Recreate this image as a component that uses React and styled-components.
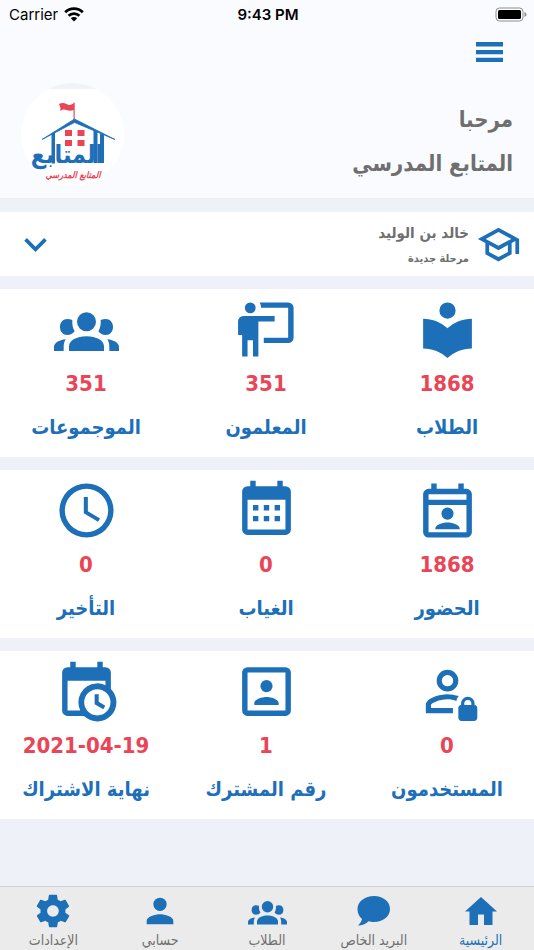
import React from "react";
import styled, { createGlobalStyle } from "styled-components";
import { IoMdSettings } from "react-icons/io";

const blue = "#1d6fb8";
const red = "#ea4557";
const grey = "#6f6f6f";

const GlobalStyle = createGlobalStyle`
  * { box-sizing: border-box; }
  body {
    margin: 0;
    background: #eef1f7;
    font-family: "DejaVu Sans Condensed", "DejaVu Sans", sans-serif;
  }
  button { font: inherit; border: 0; padding: 0; background: none; cursor: pointer; }
  svg { display: block; }
`;

const Screen = styled.div`
  min-height: 100vh;
  display: flex;
  flex-direction: column;
  color: ${grey};
`;

const Header = styled.header`
  background: #fafbff;
  border-bottom: 1px solid #eaedf2;
  padding-bottom: 12px;
`;

const StatusBar = styled.div`
  direction: ltr;
  display: grid;
  grid-template-columns: 1fr auto 1fr;
  align-items: center;
  height: 28px;
  padding: 0 7px 0 9px;
  color: #000;
  font-family: Inter, sans-serif;
  font-size: 15px;
`;

const Carrier = styled.div`
  display: flex;
  align-items: center;
  gap: 6px;
`;

const Time = styled.time`
  font-weight: 600;
`;

const Battery = styled.div`
  justify-self: end;
`;

const Toolbar = styled.div`
  display: flex;
  padding: 14px 31px 0;
`;

const MenuButton = styled.button`
  color: ${blue};
`;

const Welcome = styled.div`
  display: flex;
  justify-content: space-between;
  align-items: flex-end;
  padding: 21px 21px 0;
`;

const Greeting = styled.h1`
  margin: 0;
  font-size: 22px;
  font-weight: 700;
  line-height: 44px;
`;

const Avatar = styled.div`
  width: 103px;
  height: 103px;
  border-radius: 50%;
  overflow: hidden;
  background: #fff;
`;

const Main = styled.main`
  flex: 1;
  display: flex;
  flex-direction: column;
  gap: 13px;
  padding: 13px 0;
`;

const School = styled.button`
  display: flex;
  align-items: center;
  gap: 7px;
  width: 100%;
  height: 64px;
  padding: 0 13px;
  background: #fff;
  color: ${blue};
  text-align: start;
`;

const SchoolText = styled.span`
  flex: 1;
  display: flex;
  flex-direction: column;
  color: ${grey};
  font-weight: 700;
`;

const SchoolName = styled.span`
  font-size: 15px;
  line-height: 30px;
`;

const SchoolStage = styled.span`
  font-size: 11px;
  line-height: 22px;
`;

const Card = styled.section`
  display: grid;
  grid-template-columns: 174fr 188fr 172fr;
  min-height: 168px;
  padding-top: 8px;
  background: #fff;
`;

const Stat = styled.button`
  display: flex;
  flex-direction: column;
  align-items: center;
  color: ${blue};
  font-weight: 700;
  white-space: nowrap;
`;

const StatValue = styled.span`
  margin-top: 6px;
  color: ${red};
  font-size: 22px;
  line-height: 32px;
`;

const StatLabel = styled.span`
  margin-top: 9px;
  font-size: 20px;
  line-height: 36px;
`;

const TabBar = styled.nav`
  display: grid;
  grid-template-columns: repeat(5, 1fr);
  height: 64px;
  border-top: 1px solid #cfd3d8;
  background: #ebebeb;
`;

const Tab = styled.a`
  display: flex;
  flex-direction: column;
  align-items: center;
  padding-top: 4px;
  color: ${(p) => (p.$active ? blue : grey)};
  font-size: 14px;
  line-height: 18px;
  text-decoration: none;
  white-space: nowrap;

  svg { color: ${blue}; }
`;

const TabIcon = styled.span`
  display: flex;
  align-items: center;
  justify-content: center;
  height: 40px;
`;

const Icon = ({ size = 65, children }) => (
  <svg width={size} height={size} viewBox="0 0 24 24" fill="currentColor" fillRule="evenodd" aria-hidden="true">
    {children}
  </svg>
);

const PeopleIcon = ({ size }) => (
  <svg width={size} height={size} viewBox="0 0 195 195" fill="currentColor" aria-hidden="true">
    <circle cx="97.500" cy="74" r="28.500" />
    <path d="M45 162v-14c0-17 23-30 52.500-30s52.500 13 52.500 30v14z" />
    <path d="M55 69c-1 12 1 24 7 34-5 7-13 11-22 11-13 0-22-10-22-24s9-24 22-24c5 0 10 1 15 3z" />
    <path d="M140 69c1 12-1 24-7 34 5 7 13 11 22 11 13 0 22-10 22-24s-9-24-22-24c-5 0-10 1-15 3z" />
    <path d="M35 127c-20 2-35 11-35 23v12h29v-12c0-9 2-16 6-23z" />
    <path d="M160 127c20 2 35 11 35 23v12h-29v-12c0-9-2-16-6-23z" />
  </svg>
);

const Logo = () => (
  <svg width="103" height="103" viewBox="0 0 103 103" role="img" aria-label="المتابع المدرسي">
    <rect width="103" height="6" fill="#f2f3f9" />
    <path d="M38 21q4-2 7.500 0t7-.5V19.500h1.200V38h-1.200V27q-3 1.500-7 0t-6.500 1l.5-3z" fill={red} />
    <path d="M21 56.500 53.500 36 94 56.500 53.500 39.500z" fill={blue} stroke={blue} strokeWidth="0.800" />
    <path d="M30.500 50.500l3.500-2v32h-3.500zM72.500 47l4 1.800V80h-4zM79 50l4 1.800V80h-4z" fill={blue} />
    <path d="M44 47h7v6h-7zM56.500 47h7v6h-7zM44 57h7v6h-7zM56.500 57h7v6h-7z" fill={red} />
    <text x="46" y="80" textAnchor="middle" direction="rtl" fontSize="25" fontWeight="700" fill={blue}>المتابع</text>
    <text x="52" y="95" textAnchor="middle" direction="rtl" fontSize="9" fontWeight="700" fontStyle="italic" fill={red}>المتابع المدرسي</text>
  </svg>
);

const icons = {
  book: <Icon><path d="M12 11.550C9.640 9.350 6.480 8 3 8v11c3.480 0 6.640 1.350 9 3.550 2.360-2.190 5.520-3.550 9-3.550V8c-3.480 0-6.640 1.350-9 3.550zM12 8a3 3 0 1 0 0-6 3 3 0 0 0 0 6z" /></Icon>,
  teacher: <Icon><path d="M20 17a2 2 0 0 0 2-2V4a2 2 0 0 0-2-2H9.460C9.810 2.610 10 3.300 10 4h10v11h-9v2M15 7v2H9v13H7v-6H5v6H3v-8H1.500V9a2 2 0 0 1 2-2H15M8 4a2 2 0 1 1-4 0 2 2 0 0 1 4 0z" /></Icon>,
  people: <PeopleIcon size={65} />,
  attendance: <Icon><path d="M6 2h2v2h8V2h2v2h1a2 2 0 0 1 2 2v14a2 2 0 0 1-2 2H5a2 2 0 0 1-2-2V6a2 2 0 0 1 2-2h1zM5 6v2h14V6zM5 10v10h14V10zM12 10.900a2.250 2.250 0 1 1 0 4.500 2.250 2.250 0 0 1 0-4.500zM7.500 18.900v-.3c0-1.300 2.500-2.200 4.500-2.200s4.500.9 4.500 2.200v.3z" /></Icon>,
  calendar: <Icon><path d="M9 10v2H7v-2h2m4 0v2h-2v-2h2m4 0v2h-2v-2h2m2-7a2 2 0 0 1 2 2v14a2 2 0 0 1-2 2H5a2 2 0 0 1-2-2V5a2 2 0 0 1 2-2h1V1h2v2h8V1h2v2h1m0 16V8H5v11h14M9 14v2H7v-2h2m4 0v2h-2v-2h2m4 0v2h-2v-2h2z" /></Icon>,
  clock: <Icon><path d="M12 2a10 10 0 1 0 0 20 10 10 0 0 0 0-20zm0 18a8 8 0 1 1 0-16 8 8 0 0 1 0 16zm.5-13H11v6l5.250 3.150.75-1.230-4.500-2.670z" /></Icon>,
  userLock: <Icon><path d="M12 4a4 4 0 1 1 0 8 4 4 0 0 1 0-8m0 1.900a2.100 2.100 0 1 0 0 4.200 2.100 2.100 0 0 0 0-4.200M12 13c1.200 0 2.800.3 4.200.7-.5.500-.8 1.100-.9 1.800-1-.4-2.200-.6-3.300-.6-3 0-6.100 1.460-6.100 2.100v1.100H14V20H4v-3c0-2.670 5.330-4 8-4zM17 17v-.6a2.500 2.500 0 0 1 5 0v.6c.6.1 1 .5 1 1.100v3.600c0 .7-.5 1.200-1.200 1.200h-4.600c-.7 0-1.200-.5-1.200-1.200v-3.600c0-.6.400-1 1-1.100zm1.200 0h2.600v-.6a1.300 1.300 0 0 0-2.600 0z" /></Icon>,
  userBox: <Icon><path d="M19 19H5V5h14m0-2H5a2 2 0 0 0-2 2v14a2 2 0 0 0 2 2h14a2 2 0 0 0 2-2V5a2 2 0 0 0-2-2m-2.500 13.250C16.500 14.750 13.500 14 12 14s-4.500.75-4.500 2.250V17h9M12 12.250a2.250 2.250 0 1 0 0-4.500 2.250 2.250 0 0 0 0 4.500z" /></Icon>,
  calendarClock: <Icon><path d="M15 13h1.500v2.820l2.440 1.410-.75 1.300L15 16.690V13m4-5H5v11h4.670A7 7 0 0 1 9 16a7 7 0 0 1 10-6.330V8M5 21a2 2 0 0 1-2-2V5a2 2 0 0 1 2-2h1V1h2v2h8V1h2v2h1a2 2 0 0 1 2 2v6.100A7 7 0 0 1 11.100 21H5m11-9.850a4.850 4.850 0 1 0 0 9.700 4.850 4.850 0 0 0 0-9.700z" /></Icon>,
};

const cards = [
  [["book", "1868", "الطلاب"], ["teacher", "351", "المعلمون"], ["people", "351", "الموجموعات"]],
  [["attendance", "1868", "الحضور"], ["calendar", "0", "الغياب"], ["clock", "0", "التأخير"]],
  [["userLock", "0", "المستخدمون"], ["userBox", "1", "رقم المشترك"], ["calendarClock", "2021-04-19", "نهاية الاشتراك"]],
];

const tabs = [
  ["الرئيسية", <svg width="32" height="28" viewBox="0 0 32 28" fill="currentColor"><path d="M16 0 32 14.500h-4.500V28H19V17.500h-6V28H4.500V14.500H0z" /></svg>],
  ["البريد الخاص", <svg width="33" height="30" viewBox="0 0 33 30" fill="currentColor"><path d="M17 0c9 0 16 5.500 16 13s-7 13-16 13c-2 0-4-.2-5.500-.7C8.500 28.500 5 29.500 1 29.500c2-1.800 3.500-4 4-6.500C2 20.500.5 17 .5 13 .5 5.500 8 0 17 0z" /></svg>],
  ["الطلاب", <PeopleIcon size={39} />],
  ["حسابي", <svg width="40" height="40" viewBox="0 0 24 24" fill="currentColor"><path d="M12 12a4 4 0 1 0 0-8 4 4 0 0 0 0 8zm0 2c-2.670 0-8 1.340-8 4v2h16v-2c0-2.660-5.330-4-8-4z" /></svg>],
  ["الإعدادات", <IoMdSettings size={40} />],
];

export default function App() {
  return (
    <Screen dir="rtl" lang="ar">
      <GlobalStyle />
      <Header>
        <StatusBar>
          <Carrier>
            Carrier
            <svg width="20" height="15" viewBox="0 0 20 15" fill="none" stroke="#000" strokeWidth="2.800" aria-hidden="true">
              <path d="M1.200 5.300a12.600 12.600 0 0 1 17.600 0M4.600 8.800a7.800 7.800 0 0 1 10.800 0" />
              <path d="M10 14.500l-3.200-3.200a4.600 4.600 0 0 1 6.400 0z" fill="#000" stroke="none" />
            </svg>
          </Carrier>
          <Time>9:43 PM</Time>
          <Battery>
            <svg width="32" height="15" viewBox="0 0 32 15" aria-hidden="true">
              <rect x="1" y="1" width="27" height="13" rx="3.500" fill="none" stroke="#8d8d90" />
              <rect x="3" y="3" width="23" height="9" rx="1.500" />
              <path d="M29.500 5q2 .8 2 2.500t-2 2.500z" fill="#8d8d90" />
            </svg>
          </Battery>
        </StatusBar>
        <Toolbar>
          <MenuButton aria-label="القائمة">
            <svg width="27" height="20" viewBox="0 0 27 20" fill="currentColor"><path d="M0 0h27v4.500H0zM0 8h27v4.200H0zM0 15.700h27V20H0z" /></svg>
          </MenuButton>
        </Toolbar>
        <Welcome>
          <Greeting>مرحبا<br />المتابع المدرسي</Greeting>
          <Avatar><Logo /></Avatar>
        </Welcome>
      </Header>
      <Main>
        <School>
          <Icon size={45}><path d="M12 3 1 9l4 2.180v6L12 21l7-3.820v-6l2-1.090V17h2V9L12 3m6.820 6L12 12.720 5.180 9 12 5.280 18.820 9M17 16l-5 2.720L7 16v-3.730L12 15l5-2.730V16z" /></Icon>
          <SchoolText>
            <SchoolName>خالد بن الوليد</SchoolName>
            <SchoolStage>مرحلة جديدة</SchoolStage>
          </SchoolText>
          <Icon size={45}><path d="M7.410 8.590 12 13.170l4.590-4.580L18 10l-6 6-6-6z" /></Icon>
        </School>
        {cards.map((card, i) => (
          <Card key={i}>
            {card.map(([icon, value, label]) => (
              <Stat key={label}>
                {icons[icon]}
                <StatValue>{value}</StatValue>
                <StatLabel>{label}</StatLabel>
              </Stat>
            ))}
          </Card>
        ))}
      </Main>
      <TabBar>
        {tabs.map(([label, icon], i) => (
          <Tab key={label} href="#" $active={i === 0} aria-current={i === 0 ? "page" : undefined}>
            <TabIcon>{icon}</TabIcon>
            {label}
          </Tab>
        ))}
      </TabBar>
    </Screen>
  );
}
